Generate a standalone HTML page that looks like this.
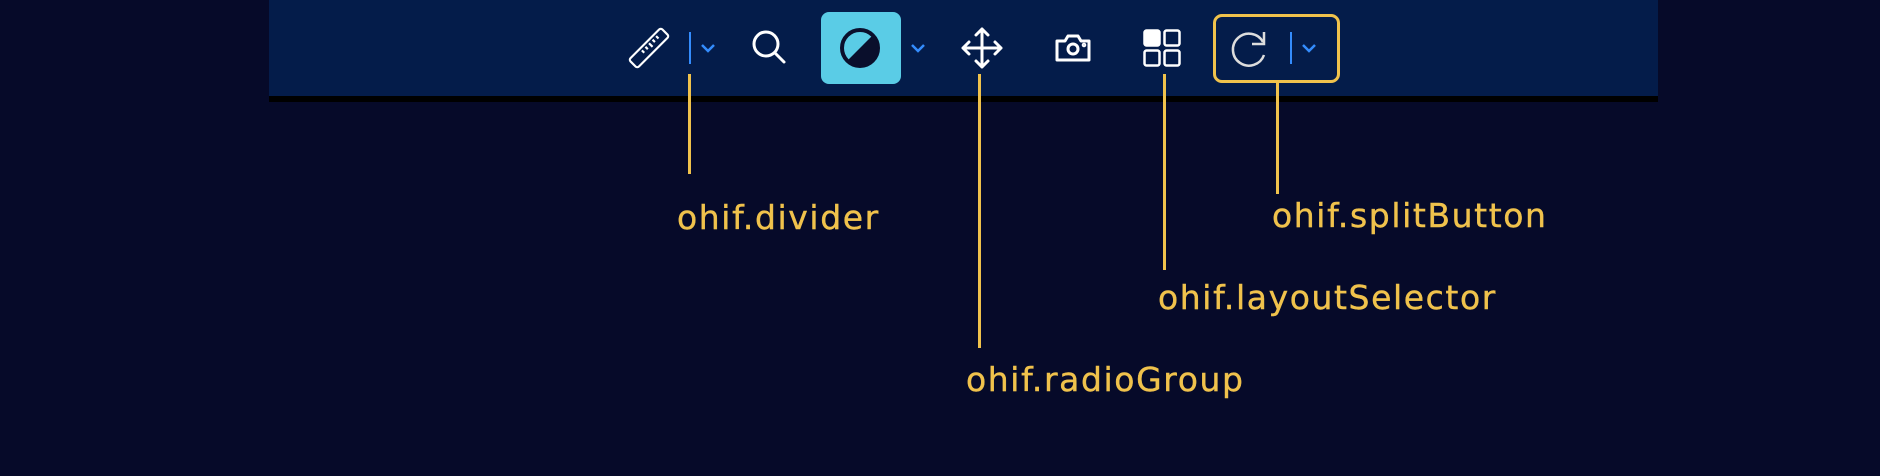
<!DOCTYPE html>
<html><head><style>
body{margin:0;width:1880px;height:476px;background:#060a29;position:relative;overflow:hidden;font-family:"DejaVu Sans","Liberation Sans",sans-serif}
.bar{position:absolute;left:269px;top:0;width:1389px;height:96px;background:#041c4a;border-bottom:6px solid #000}
.abs{position:absolute}
.vl{position:absolute;width:3px;background:#f0c24c}
.lbl{position:absolute;color:#f0c24c;font-size:33px;letter-spacing:1.6px;line-height:33px;-webkit-text-stroke:0.4px #f0c24c}
svg{position:absolute;overflow:visible}
</style></head><body>
<div class="bar"></div>
<svg style="left:630px;top:29px" width="38" height="38" viewBox="0 0 32 32" fill="none" stroke="#fff" stroke-width="1.8" stroke-linejoin="round"><rect x="-3" y="11" width="38" height="10" rx="2" transform="rotate(-45 16 16)"/><path d="M10 18l2 2M13 15l2 2M16 12l3 3M19 9l2 2M22 6l2 2" /></svg>
<div class="abs" style="left:689px;top:32px;width:2px;height:32px;background:#348cfd"></div>
<svg style="left:700px;top:43px" width="16" height="10"><path d="M2 2l6 6 6-6" stroke="#348cfd" stroke-width="2.5" fill="none"/></svg>
<svg style="left:750px;top:28px" width="40" height="40" fill="none" stroke="#fff" stroke-width="3"><circle cx="16" cy="16" r="12"/><path d="M25 25l9 9" stroke-linecap="round"/></svg>
<div class="abs" style="left:821px;top:12px;width:80px;height:72px;border-radius:8px;background:#5acce6"></div>
<svg style="left:840px;top:28px" width="40" height="40"><circle cx="20" cy="20" r="18" fill="#5acce6" stroke="#0a0f2c" stroke-width="4"/><path d="M32.7 7.3A18 18 0 0 1 7.3 32.7Z" fill="#0a0f2c"/></svg>
<svg style="left:910px;top:43px" width="16" height="10"><path d="M2 2l6 6 6-6" stroke="#348cfd" stroke-width="2.5" fill="none"/></svg>
<svg style="left:962px;top:27px" width="40" height="42" fill="none" stroke="#fff" stroke-width="3" stroke-linecap="round" stroke-linejoin="round"><path d="M20 2v38M1 21h38M14 8l6-6 6 6M14 34l6 6 6-6M7 15l-6 6 6 6M33 15l6 6-6 6"/></svg>
<svg style="left:1054px;top:33px" width="38" height="30" fill="none" stroke="#fff" stroke-width="3" stroke-linejoin="round"><path d="M3 8h8l3-5h10l3 5h8v19H3z"/><circle cx="19" cy="16" r="5"/><circle cx="30" cy="12" r="0.8" fill="#fff"/></svg>
<svg style="left:1143px;top:29px" width="38" height="38" fill="none" stroke="#fff" stroke-width="2.5"><rect x="1.5" y="1.5" width="15" height="15" rx="2" fill="#fff"/><rect x="21.5" y="1.5" width="15" height="15" rx="2"/><rect x="1.5" y="21.5" width="15" height="15" rx="2"/><rect x="21.5" y="21.5" width="15" height="15" rx="2"/></svg>
<div class="abs" style="left:1213px;top:14px;width:121px;height:63px;border:3px solid #f0c24c;border-radius:9px"></div>
<svg style="left:1230px;top:28px" width="40" height="42" fill="none" stroke="#ddd" stroke-width="2.5"><path d="M33 14A16 16 0 1 0 34 27"/><path d="M34 4v12H22"/></svg>
<div class="abs" style="left:1290px;top:32px;width:2px;height:32px;background:#348cfd"></div>
<svg style="left:1301px;top:43px" width="16" height="10"><path d="M2 2l6 6 6-6" stroke="#348cfd" stroke-width="2.5" fill="none"/></svg>
<div class="vl" style="left:688px;top:74px;height:100px"></div>
<div class="vl" style="left:978px;top:74px;height:274px"></div>
<div class="vl" style="left:1163px;top:74px;height:196px"></div>
<div class="vl" style="left:1276px;top:83px;height:111px"></div>
<div class="lbl" style="left:677px;top:201px">ohif.divider</div>
<div class="lbl" style="left:966px;top:363px">ohif.radioGroup</div>
<div class="lbl" style="left:1158px;top:281px">ohif.layoutSelector</div>
<div class="lbl" style="left:1272px;top:199px">ohif.splitButton</div>
</body></html>
